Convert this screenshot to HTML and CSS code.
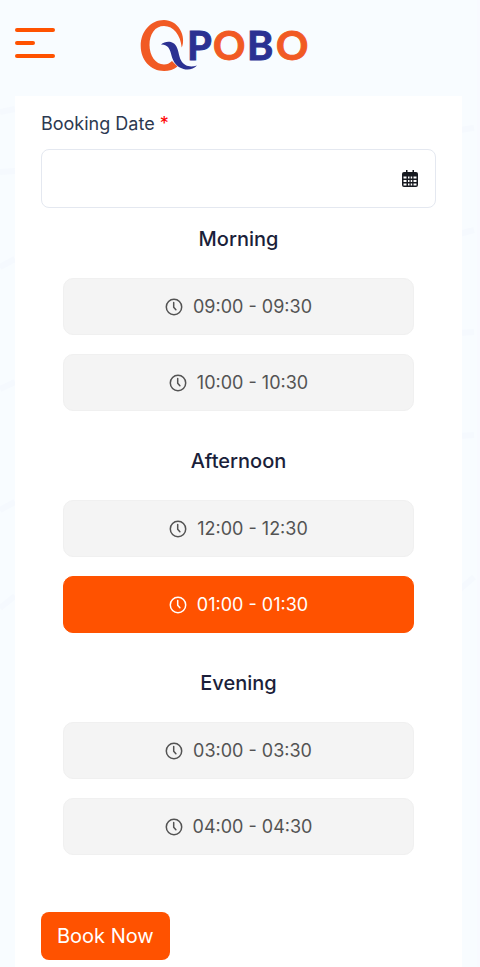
FILE: index.html
```html
<!DOCTYPE html>
<html lang="en">
<head>
<meta charset="utf-8">
<meta name="viewport" content="width=device-width, initial-scale=1">
<title>Qpobo</title>
<link rel="stylesheet" href="styles.css">
</head>
<body>
<svg width="0" height="0" class="sprite" aria-hidden="true">
  <symbol id="clock" viewBox="0 0 18 18">
    <circle cx="9" cy="9" r="7.700" fill="none" stroke="currentColor" stroke-width="1.500"/>
    <path d="M8.700 4.500V9.200L10.900 11.800" fill="none" stroke="currentColor" stroke-width="1.500" stroke-linecap="round" stroke-linejoin="round"/>
  </symbol>
</svg>
<svg class="streaks" viewBox="0 0 480 967" preserveAspectRatio="none" aria-hidden="true">
  <path d="M0 112L15 109M0 172L15 171M0 267L15 259M0 389L15 382M0 510L15 502"/>
  <path d="M0 608L15 596M462 130L477 128M462 234L477 230M462 333L477 332M462 436L477 435M462 590L477 577"/>
</svg>
<header class="header">
  <button class="menu" type="button" aria-label="Menu"><span></span><span></span><span></span></button>
  <a class="logo" href="#" aria-label="Qpobo home">
    <svg width="170" height="54" viewBox="0 0 170 54">
      <path fill="#f15a24" d="M41.700 29.500C44 25 43.500 17 40 11.500C36.500 5.500 30.500 2 24 2C11 2 .700 13 .700 28C.700 42 10.500 53 24 53C29 53 34 51.500 37.500 48.500L32 43C29.500 45.500 27 46.500 24 46.500C15.500 46.500 9.500 37.500 9.500 27C9.500 16 15 8 24 8C33.500 8 40.500 17 41.700 29.500Z"/>
      <path fill="#2b3192" d="M21 26.500C24 24 28 23.200 31.500 24.300C36 25.800 37.500 30 38.500 34.500C39.800 41 41.500 44.500 45.500 47C49 49 53 48.700 57 47.500C53.500 51.500 48 52.300 43.500 51C36.500 49 33 43.500 31.500 37.500C30 31.500 28.500 26.300 21 26.500Z"/>
      <g class="logo-text">
        <text class="blue" x="47" y="42">P</text>
        <text class="orange" x="73" y="42">O</text>
        <text class="blue" x="107" y="42">B</text>
        <text class="orange" x="136" y="42">O</text>
      </g>
    </svg>
  </a>
</header>
<main class="card">
  <form class="form">
    <label class="label" for="date">Booking Date <span class="required">*</span></label>
    <div class="field">
      <input id="date" class="date" type="text">
      <button class="picker" type="button" aria-label="Choose date">
        <svg width="16" height="18" viewBox="0 0 16 18">
          <path fill="#171a20" fill-rule="evenodd" d="M4 0h1.500v2h5V0H12v2h2q2 0 2 2v11q0 2-2 2H2q-2 0-2-2V4q0-2 2-2h2zM1.500 6.500v2h3v-2zM6 6.500v2h1.500v-2zM8.700 6.500v2h1.500v-2zM11.500 6.500v2h3v-2zM1.500 10v2h3v-2zM6 10v2h1.500v-2zM8.700 10v2h1.500v-2zM11.500 10v2h3v-2zM1.500 13.500v2h3v-2zM6 13.500v2h1.500v-2zM8.700 13.500v2h1.500v-2zM11.500 13.500v2h3v-2z"/>
        </svg>
      </button>
    </div>
    <div class="groups">
      <section class="group">
        <h2>Morning</h2>
        <div class="slots">
          <button class="slot" type="button"><svg><use href="#clock"/></svg>09:00 - 09:30</button>
          <button class="slot" type="button"><svg><use href="#clock"/></svg>10:00 - 10:30</button>
        </div>
      </section>
      <section class="group">
        <h2>Afternoon</h2>
        <div class="slots">
          <button class="slot" type="button"><svg><use href="#clock"/></svg>12:00 - 12:30</button>
          <button class="slot selected" type="button" aria-pressed="true"><svg><use href="#clock"/></svg>01:00 - 01:30</button>
        </div>
      </section>
      <section class="group">
        <h2>Evening</h2>
        <div class="slots">
          <button class="slot" type="button"><svg><use href="#clock"/></svg>03:00 - 03:30</button>
          <button class="slot" type="button"><svg><use href="#clock"/></svg>04:00 - 04:30</button>
        </div>
      </section>
    </div>
    <button class="submit" type="submit">Book Now</button>
  </form>
</main>
</body>
</html>
```
FILE: styles.css
```css
* { box-sizing: border-box; }
body {
  margin: 0;
  position: relative;
  background: #f8fcff;
  border-right: 3px solid #f8faff;
  font-family: Inter, "Liberation Sans", sans-serif;
  color: #1b1f3a;
}
button, input { font: inherit; }
.sprite { position: absolute; }
.streaks {
  position: absolute;
  inset: 0;
  z-index: -1;
  width: 100%;
  height: 100%;
  fill: none;
  stroke: #f5f9fe;
  stroke-width: 6;
}
.header {
  display: grid;
  grid-template-columns: 40px 1fr 40px;
  align-items: start;
  height: 96px;
  padding: 18px 15px 0;
}
.menu {
  display: flex;
  flex-direction: column;
  gap: 9px;
  margin-top: 10px;
  padding: 0;
  border: 0;
  background: none;
}
.menu span {
  width: 40px;
  height: 4px;
  border-radius: 2px;
  background: #ff5200;
}
.menu span:nth-child(2) { width: 20px; }
.logo {
  justify-self: center;
  margin-right: 28px;
}
.logo svg { display: block; }
.logo-text {
  font: bold 40px Lato, sans-serif;
  stroke-width: 1;
}
.blue { fill: #2b3192; stroke: #2b3192; }
.orange { fill: #f15a24; stroke: #f15a24; }
.card {
  margin: 0 15px;
  padding: 16px 26px 7px;
  background: #fff;
}
.form { display: flex; flex-direction: column; }
.label {
  font-size: 18px;
  line-height: 24px;
  color: #2c3950;
}
.required { color: #f00; }
.field {
  display: flex;
  height: 59px;
  margin-top: 13px;
  border: 1px solid #e4e8f0;
  border-radius: 8px;
}
.date {
  flex: 1;
  min-width: 0;
  padding: 0 16px;
  border: 0;
  background: none;
  font-size: 18px;
}
.picker {
  display: flex;
  align-items: center;
  padding: 0 17px;
  border: 0;
  background: none;
}
.groups {
  display: flex;
  flex-direction: column;
  gap: 38px;
  margin-top: 19px;
  padding: 0 22px;
}
h2 {
  margin: 0 0 27px;
  font-size: 20px;
  line-height: 24px;
  font-weight: 500;
  text-align: center;
}
.slots {
  display: flex;
  flex-direction: column;
  gap: 19px;
}
.slot {
  display: flex;
  align-items: center;
  justify-content: center;
  gap: 10px;
  height: 57px;
  padding: 0;
  border: 1px solid #f0f0f0;
  border-radius: 10px;
  background: #f4f4f4;
  color: #535353;
  font-size: 18px;
}
.slot svg { width: 18px; height: 18px; }
.selected {
  border-color: #ff5200;
  background: #ff5200;
  color: #fff;
}
.submit {
  align-self: flex-start;
  height: 48px;
  margin-top: 57px;
  padding: 0 16px;
  border: 0;
  border-radius: 8px;
  background: #ff5200;
  color: #fff;
  font-size: 20px;
}
```
